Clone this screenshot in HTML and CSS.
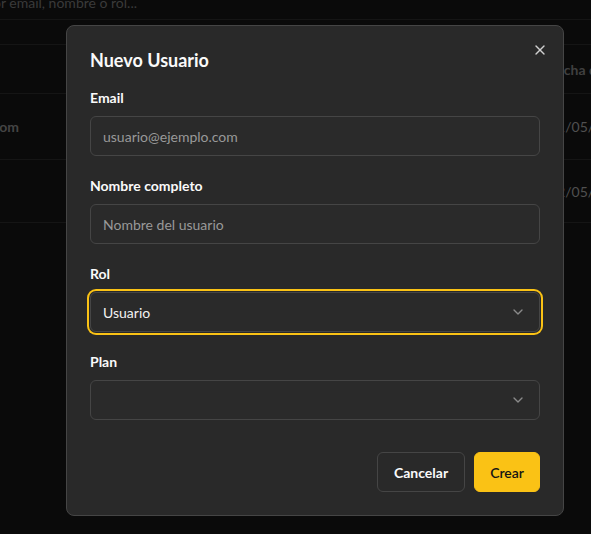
FILE: index.html
```html
<!DOCTYPE html>
<html lang="es">
<head>
<meta charset="utf-8">
<title>Nuevo Usuario</title>
<link rel="stylesheet" href="styles.css">
</head>
<body>
<div class="page">
  <div class="search-row">
    <div class="search-clip"><span class="search-text">Buscar por email, nombre o rol...</span></div>
  </div>
  <div class="table">
    <div class="tr th">
      <div class="td c1"></div>
      <div class="td c2"></div>
      <div class="td c3">Fecha de registro</div>
    </div>
    <div class="tr row1">
      <div class="td c1"><span class="email">admin@ejemplo.com</span></div>
      <div class="td c2"></div>
      <div class="td c3 date">01/05/2025</div>
    </div>
    <div class="tr row2">
      <div class="td c1"></div>
      <div class="td c2"></div>
      <div class="td c3 date">02/05/2025</div>
    </div>
  </div>
</div>

<div class="overlay">
  <div class="modal">
    <button class="close" aria-label="Cerrar">
      <svg width="16" height="16" viewBox="0 0 24 24" fill="none" stroke="currentColor" stroke-width="2" stroke-linecap="round" stroke-linejoin="round"><path d="M18 6 6 18"/><path d="m6 6 12 12"/></svg>
    </button>
    <h2 class="title">Nuevo Usuario</h2>
    <div class="fields">
      <div class="field">
        <label class="label">Email</label>
        <div class="input"><span class="placeholder">usuario@ejemplo.com</span></div>
      </div>
      <div class="field">
        <label class="label">Nombre completo</label>
        <div class="input"><span class="placeholder">Nombre del usuario</span></div>
      </div>
      <div class="field">
        <label class="label">Rol</label>
        <div class="input select focused"><span class="value">Usuario</span>
          <svg class="chev" width="16" height="16" viewBox="0 0 24 24" fill="none" stroke="currentColor" stroke-width="2" stroke-linecap="round" stroke-linejoin="round"><path d="m6 9 6 6 6-6"/></svg>
        </div>
      </div>
      <div class="field">
        <label class="label">Plan</label>
        <div class="input select"><span class="value"></span>
          <svg class="chev" width="16" height="16" viewBox="0 0 24 24" fill="none" stroke="currentColor" stroke-width="2" stroke-linecap="round" stroke-linejoin="round"><path d="m6 9 6 6 6-6"/></svg>
        </div>
      </div>
    </div>
    <div class="footer">
      <button class="btn btn-outline">Cancelar</button>
      <button class="btn btn-primary">Crear</button>
    </div>
  </div>
</div>
</body>
</html>
```

FILE: styles.css
```css
* { box-sizing: border-box; }
html, body { margin: 0; padding: 0; }
body {
  background: #0a0a0a;
  font-family: Lato, "Segoe UI", "Noto Sans", sans-serif;
  color: #fafafa;
  overflow: hidden;
  height: 534px;
}
.page { height: 534px; background: #0a0a0a; }

.search-row {
  height: 20px;
  display: flex;
  align-items: flex-end;
  border-bottom: 1px solid #151515;
}
.search-clip {
  width: 137px;
  display: flex;
  justify-content: flex-end;
  padding-bottom: 8px;
}
.search-text {
  white-space: nowrap;
  font-size: 14px;
  line-height: 16px;
  color: #3a3a3a;
}

.table { margin-top: 24px; }
.tr {
  display: grid;
  grid-template-columns: 48px 1fr 41px;
  border-top: 1px solid #151515;
  align-items: center;
}
.th { height: 49px; }
.row1 { height: 66px; }
.row2 { height: 64px; border-bottom: 1px solid #151515; }
.td {
  font-size: 14px;
  white-space: nowrap;
  overflow: hidden;
  color: #3f3f3f;
}
.c1 { display: flex; justify-content: flex-end; padding-right: 29px; overflow: visible; }
.email { font-weight: 700; color: #444; }
.th .c3 { font-weight: 700; color: #404040; }
.c3 { padding-left: 0; margin-left: -1px; }
.date { color: #505050; }

.overlay {
  position: fixed;
  inset: 0;
  padding: 25px 0 0 66px;
}
.modal {
  position: relative;
  width: 498px;
  background: #292929;
  border: 1px solid #454545;
  border-radius: 8px;
  padding: 24px 23px 23px 23px;
}
.close {
  position: absolute;
  top: 16px;
  right: 15px;
  width: 16px;
  height: 16px;
  padding: 0;
  border: 0;
  background: none;
  color: #cfcfcf;
  display: flex;
}
.title {
  margin: 0 0 18px;
  font-size: 18px;
  line-height: 20px;
  font-weight: 700;
  color: #fafafa;
}
.fields { display: flex; flex-direction: column; gap: 20px; }
.field { display: flex; flex-direction: column; gap: 8px; }
.label {
  font-size: 14px;
  line-height: 20px;
  font-weight: 700;
  color: #fafafa;
}
.input {
  height: 40px;
  border: 1px solid #454545;
  border-radius: 6px;
  background: #2a2a2a;
  display: flex;
  align-items: center;
  padding: 0 12px;
  font-size: 14px;
}
.placeholder { color: #999; }
.value { color: #f2f2f2; flex: 1; }
.select { justify-content: space-between; padding-right: 13px; }
.chev { color: #8a8a8a; flex: none; }
.focused {
  box-shadow: 0 0 0 1px #292929, 0 0 0 3px #fac215;
}

.footer {
  margin-top: 32px;
  display: flex;
  justify-content: flex-end;
  gap: 9px;
}
.btn {
  height: 40px;
  border-radius: 6px;
  font-family: inherit;
  font-size: 14px;
  font-weight: 700;
}
.btn-outline {
  padding: 0 16px;
  background: #292929;
  border: 1px solid #454545;
  color: #fafafa;
}
.btn-primary {
  padding: 0 15px;
  background: #fac215;
  border: 1px solid #fac215;
  color: #141414;
  font-weight: 600;
}
```
